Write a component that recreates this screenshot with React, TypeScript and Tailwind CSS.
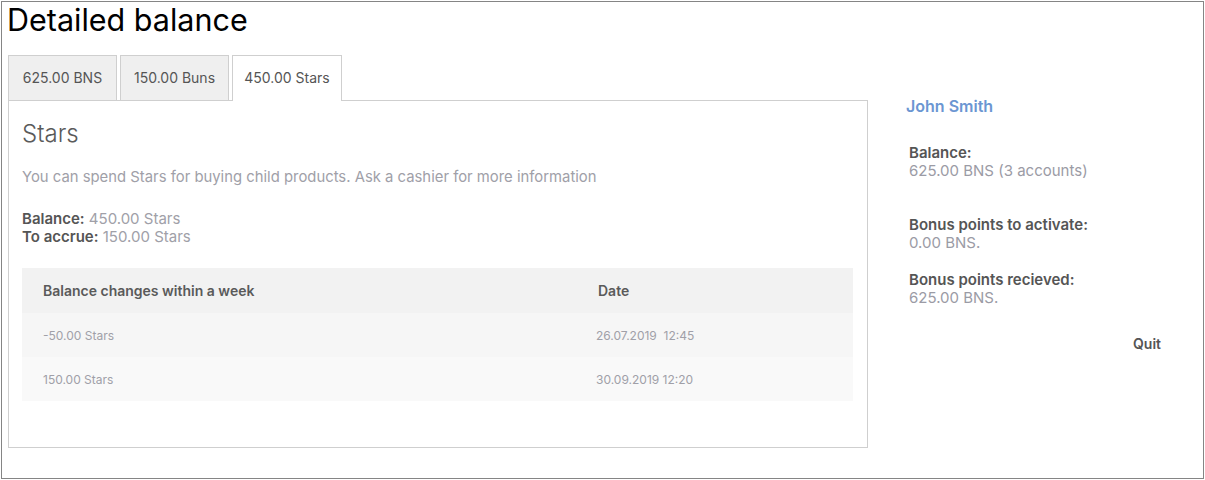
import React from "react";

const font = { fontFamily: "Inter, 'Noto Sans', sans-serif" };

export default function App() {
  const tabs = [
    { label: "625.00 BNS", w: "w-[109px]", active: false },
    { label: "150.00 Buns", w: "w-[109px]", active: false },
    { label: "450.00 Stars", w: "w-[110px]", active: true },
  ];
  return (
    <div style={font} className="bg-white w-[1205px] h-[480px] pt-px pl-px">
      <div className="w-[1203px] h-[478px] border border-[#858585] pl-[6px] pt-0 box-border">
        <h1 className="-ml-px text-[30.5px] leading-[36px] text-black font-normal">Detailed balance</h1>
        <div className="flex mt-[17px]">
          {/* Left column */}
          <div className="w-[860px] flex flex-col">
            <div className="flex gap-[3px] items-end">
              {tabs.map((t) => (
                <div
                  key={t.label}
                  className={`${t.w} flex items-center justify-center text-[14px] text-[#555] border border-[#cfcfcf] border-b-0 ${
                    t.active ? "bg-white relative z-10 mb-[-1px] h-[46px] pb-[2px]" : "bg-[#efefef] h-[45px] pb-px"
                  }`}
                >
                  {t.label}
                </div>
              ))}
            </div>
            <div className="border border-[#cfcfcf] h-[348px] px-[13px] pt-[19px]">
              <div className="text-[24px] leading-[28px] text-[#5a5a5a] font-light">Stars</div>
              <div className="mt-[20px] text-[14.85px] leading-[18px] text-[#a0a0a8]">
                You can spend Stars for buying child products. Ask a cashier for more information
              </div>
              <div className="mt-[24px] text-[15px] leading-[18px] text-[#a0a0a8]">
                <div>
                  <span className="font-semibold text-[#555]">Balance:</span> 450.00 Stars
                </div>
                <div>
                  <span className="font-semibold text-[#555]">To accrue:</span> 150.00 Stars
                </div>
              </div>
              <div className="mt-[22px] w-[831px]">
                <div className="flex h-[45px] items-center bg-[#f2f2f2] text-[14px] font-semibold text-[#5a5a5a] pb-px">
                  <div className="w-[576px] pl-[21px]">Balance changes within a week</div>
                  <div>Date</div>
                </div>
                <div className="flex h-[44px] items-center bg-[#f6f6f6] text-[12px] text-[#a0a0a8] pt-[2px]">
                  <div className="w-[574px] pl-[21px]">-50.00 Stars</div>
                  <div className="whitespace-pre">26.07.2019  12:45</div>
                </div>
                <div className="flex h-[44px] items-center bg-[#f9f9f9] text-[12px] text-[#a0a0a8] pt-[2px]">
                  <div className="w-[574px] pl-[21px]">150.00 Stars</div>
                  <div>30.09.2019 12:20</div>
                </div>
              </div>
            </div>
          </div>
          {/* Right column */}
          <div className="ml-[38px] w-[255px] pt-[42px] flex flex-col">
            <div className="text-[16px] leading-[18px] font-semibold text-[#6b96d2]">John Smith</div>
            <div className="pl-[3px] mt-[29px] text-[15px] leading-[18px]">
              <div className="font-semibold text-[#555]">Balance:</div>
              <div className="text-[#9b9ba5]">625.00 BNS (3 accounts)</div>
            </div>
            <div className="pl-[3px] mt-[36px] text-[15px] leading-[18px]">
              <div className="font-semibold text-[#555]">Bonus points to activate:</div>
              <div className="text-[#9b9ba5]">0.00 BNS.</div>
            </div>
            <div className="pl-[3px] mt-[19px] text-[15px] leading-[18px]">
              <div className="font-semibold text-[#555]">Bonus points recieved:</div>
              <div className="text-[#9b9ba5]">625.00 BNS.</div>
            </div>
            <div className="mt-[28px] text-right text-[14px] leading-[18px] font-semibold text-[#555]">Quit</div>
          </div>
        </div>
      </div>
    </div>
  );
}
